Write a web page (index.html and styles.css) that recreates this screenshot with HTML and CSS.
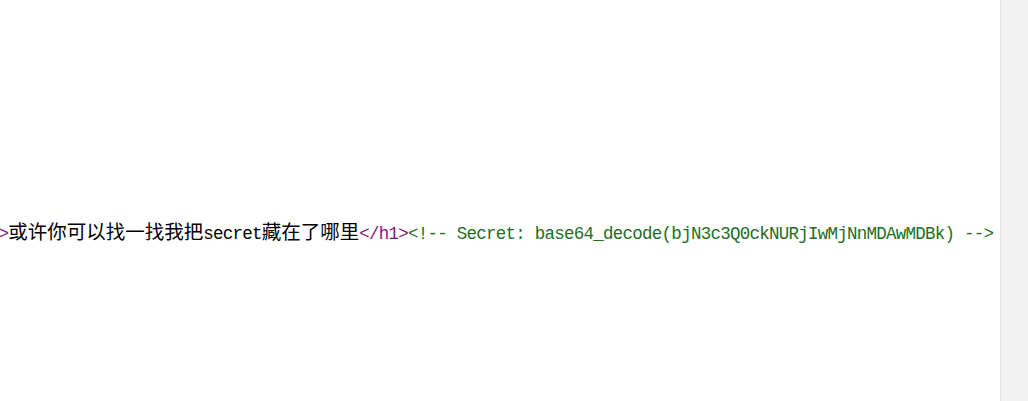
FILE: index.html
```html
<!DOCTYPE html>
<html>
<head>
<meta charset="utf-8">
<link rel="stylesheet" href="styles.css">
</head>
<body>
<div class="page">
  <main class="view">
    <div class="line"><span class="tag">&lt;h1&gt;</span><span class="cjk">或许你可以找一找我把</span>secret<span class="cjk">藏在了哪里</span><span class="tag">&lt;/h1&gt;</span><span class="comment">&lt;!-- Secret: base64_decode(bjN3c3Q0ckNURjIwMjNnMDAwMDBk) --&gt;</span></div>
  </main>
  <div class="scrollbar"></div>
</div>
</body>
</html>
```

FILE: styles.css
```css
html, body {
  margin: 0;
  padding: 0;
  background: #ffffff;
}
.page {
  display: flex;
  width: 1028px;
  height: 401px;
  overflow: hidden;
}
.view {
  flex: 1;
  overflow: hidden;
  padding-top: 219px;
}
.line {
  white-space: nowrap;
  margin-left: -30.75px;
  font-family: "Liberation Mono", monospace;
  font-size: 17.5px;
  letter-spacing: -0.75px;
  line-height: 24px;
  color: #000000;
}
.cjk {
  font-family: "Noto Sans CJK SC", sans-serif;
  font-size: 19.5px;
  letter-spacing: 0;
  font-weight: 400;
}
.tag {
  color: #881280;
}
.comment {
  color: #236e25;
}
.scrollbar {
  width: 27px;
  flex: none;
  background: #f1f1f1;
  border-left: 1px solid #e6e6e6;
}
```
